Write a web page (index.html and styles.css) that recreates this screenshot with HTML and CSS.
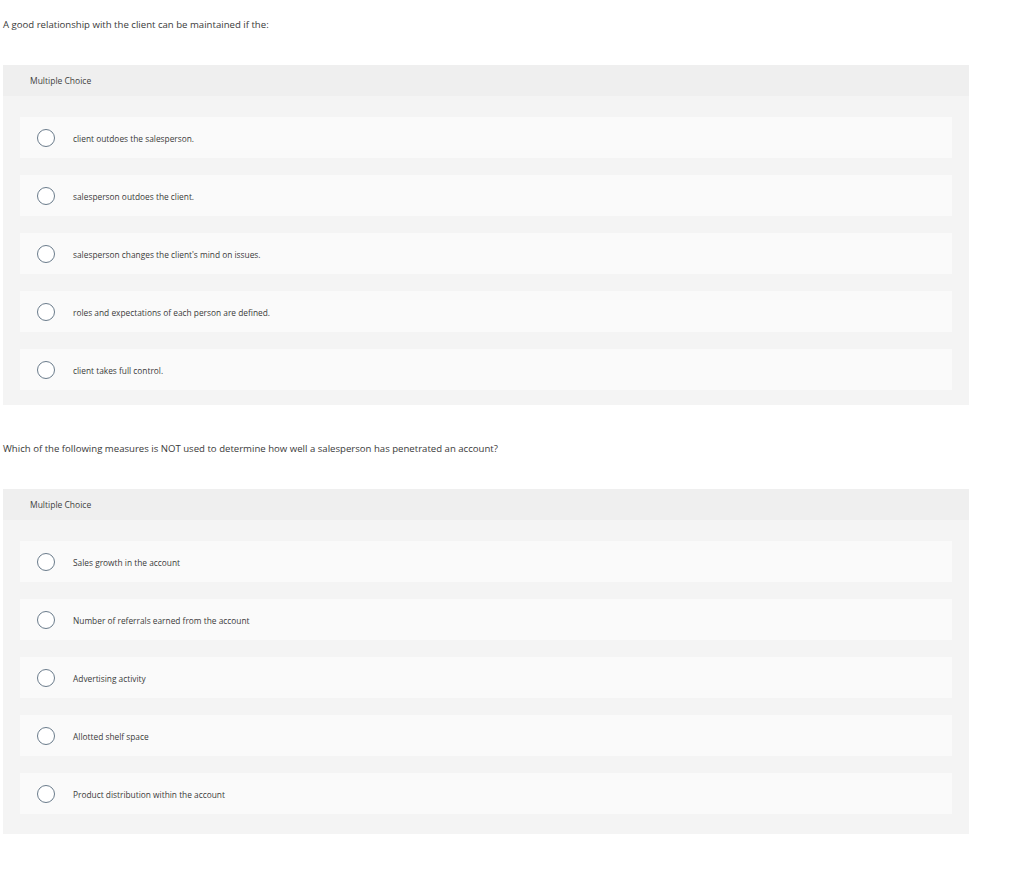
FILE: index.html
```html
<!DOCTYPE html>
<html lang="en">
<head>
<meta charset="utf-8">
<title>Multiple Choice</title>
<link rel="stylesheet" href="styles.css">
</head>
<body>
<div class="page">
  <section class="question">
    <p class="prompt">A good relationship with the client can be maintained if the:</p>
    <div class="panel">
      <div class="panel-head">Multiple Choice</div>
      <div class="panel-body">
        <label class="option"><span class="radio"></span><span class="opt-text">client outdoes the salesperson.</span></label>
        <label class="option"><span class="radio"></span><span class="opt-text">salesperson outdoes the client.</span></label>
        <label class="option"><span class="radio"></span><span class="opt-text">salesperson changes the client's mind on issues.</span></label>
        <label class="option"><span class="radio"></span><span class="opt-text">roles and expectations of each person are defined.</span></label>
        <label class="option"><span class="radio"></span><span class="opt-text">client takes full control.</span></label>
      </div>
    </div>
  </section>
  <section class="question">
    <p class="prompt">Which of the following measures is NOT used to determine how well a salesperson has penetrated an account?</p>
    <div class="panel">
      <div class="panel-head">Multiple Choice</div>
      <div class="panel-body panel-body-last">
        <label class="option"><span class="radio"></span><span class="opt-text">Sales growth in the account</span></label>
        <label class="option"><span class="radio"></span><span class="opt-text">Number of referrals earned from the account</span></label>
        <label class="option"><span class="radio"></span><span class="opt-text">Advertising activity</span></label>
        <label class="option"><span class="radio"></span><span class="opt-text">Allotted shelf space</span></label>
        <label class="option"><span class="radio"></span><span class="opt-text">Product distribution within the account</span></label>
      </div>
    </div>
  </section>
</div>
</body>
</html>
```

FILE: styles.css
```css
html, body {
  margin: 0;
  padding: 0;
  background: #ffffff;
}

body {
  font-family: "Open Sans", "Liberation Sans", Arial, sans-serif;
  color: #333333;
}

.page {
  width: 966px;
  padding: 18px 0 0 3px;
}

.question {
  margin-bottom: 37px;
}

.prompt {
  margin: 0 0 33px 0;
  font-size: 9.6px;
  line-height: 14px;
  color: #3a3a3a;
  white-space: nowrap;
}

.panel {
  background: #f4f4f4;
}

.panel-head {
  height: 31px;
  display: flex;
  align-items: center;
  padding-left: 27px;
  background: #efefef;
  font-size: 8.5px;
  color: #3f3f3f;
}

.panel-body {
  display: flex;
  flex-direction: column;
  gap: 17px;
  padding: 21px 17px 15px 17px;
}

.panel-body-last {
  padding-bottom: 20px;
}

.option {
  height: 41px;
  display: flex;
  align-items: center;
  padding-left: 17px;
  background: #fafafa;
}

.radio {
  width: 16px;
  height: 16px;
  border: 1px solid #6a7b8b;
  border-radius: 50%;
  background: #ffffff;
  flex: none;
}

.opt-text {
  margin-left: 18px;
  padding-top: 1px;
  font-size: 8.35px;
  color: #3a3a3a;
}
```
